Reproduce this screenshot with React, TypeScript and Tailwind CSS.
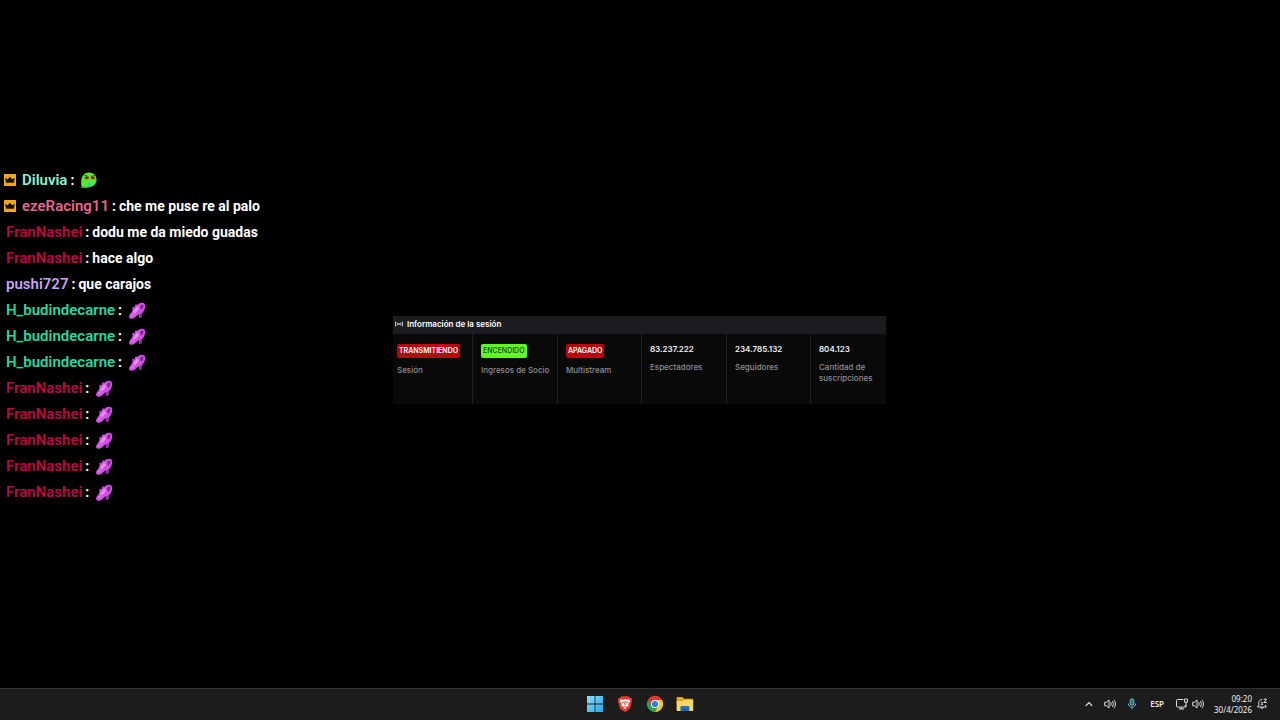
import type { ReactNode } from "react";
import clsx from "clsx";

type Message = {
  user: string;
  color: string;
  crown?: boolean;
  text?: string;
  emote?: "sick" | "heel";
};

const messages: Message[] = [
  { user: "Diluvia", color: "text-[#8ff0d0]", crown: true, emote: "sick" },
  { user: "ezeRacing11", color: "text-[#e0688c]", crown: true, text: "che me puse re al palo" },
  { user: "FranNashei", color: "text-[#bc0a40]", text: "dodu me da miedo guadas" },
  { user: "FranNashei", color: "text-[#bc0a40]", text: "hace algo" },
  { user: "pushi727", color: "text-[#c8a2f4]", text: "que carajos" },
  { user: "H_budindecarne", color: "text-[#2bd6a0]", emote: "heel" },
  { user: "H_budindecarne", color: "text-[#2bd6a0]", emote: "heel" },
  { user: "H_budindecarne", color: "text-[#2bd6a0]", emote: "heel" },
  { user: "FranNashei", color: "text-[#bc0a40]", emote: "heel" },
  { user: "FranNashei", color: "text-[#bc0a40]", emote: "heel" },
  { user: "FranNashei", color: "text-[#bc0a40]", emote: "heel" },
  { user: "FranNashei", color: "text-[#bc0a40]", emote: "heel" },
  { user: "FranNashei", color: "text-[#bc0a40]", emote: "heel" },
];

type Stat = { label: string; value: string; badge?: "red" | "green" };

const stats: Stat[] = [
  { label: "Sesión", value: "TRANSMITIENDO", badge: "red" },
  { label: "Ingresos de Socio", value: "ENCENDIDO", badge: "green" },
  { label: "Multistream", value: "APAGADO", badge: "red" },
  { label: "Espectadores", value: "83.237.222" },
  { label: "Seguidores", value: "234.785.132" },
  { label: "Cantidad de suscripciones", value: "804.123" },
];

function CrownBadge() {
  return (
    <svg viewBox="0 0 12 12" className="mr-1.5 h-3 w-3 shrink-0">
      <rect width="12" height="12" rx="0.5" fill="#f0a820" />
      <path d="M1.200 3.800 3.600 5.200 6 2.800l2.400 2.400 2.400-1.400-.9 5H2.100z" fill="#1a1204" />
    </svg>
  );
}

function SickEmote() {
  return (
    <svg viewBox="0 0 18 18" className="ml-1.5 h-[18px] w-[18px]">
      <path d="M9 1.400c4.600 0 7.600 3 7.600 7.200 0 4.400-3.200 7.400-7.200 7.400-1.600 0-2.400.8-4 .8H1.800C1.200 15.600 1.200 13.400 1.200 11 1.200 5.200 4.200 1.400 9 1.400z" fill="#58e832" />
      <path d="M1.600 13.500c.6 2.200 2 3.200 4.400 3.100l2.200-.4c-3-.5-5.200-1.200-6.600-2.700z" fill="#34c62c" />
      <path d="m4.400 4.400 4 1.200M14.800 4.400l-3.800 1.200" stroke="#5a5a14" strokeWidth="1.200" />
      <ellipse cx="6.800" cy="6.800" rx="2.400" ry="1.600" fill="#a84a20" />
      <ellipse cx="13" cy="6.800" rx="2.400" ry="1.600" fill="#a84a20" />
      <circle cx="7" cy="6.800" r=".8" fill="#38180c" />
      <circle cx="12.800" cy="6.800" r=".8" fill="#38180c" />
      <path d="M7.800 11.200h2.600v3c0 1.500-.8 2.400-1.600 2.400s-1.500-.8-1.400-2z" fill="#38c8c0" />
    </svg>
  );
}

// High heel: toe at the lower left, ankle opening at the upper right
function HeelEmote() {
  return (
    <svg viewBox="0 0 18 18" className="ml-1.5 h-[18px] w-[18px]">
      <path d="M9.600 3.800c1.200-1.800 3.800-2.600 5.900-1.900 1.800.7 2.100 2.700 1.500 5-.7 2.500-2 4.400-3.200 5.600l-.5 4-2.200.3-.1-3.600c-2.300.9-3.700 4.100-7 4.600-1.800.2-3.300-1-3-2.600.5-2 2.700-3.200 3.400-5.600l.2-4 1.900.9.900-2.900z" fill="#d050e0" />
      <path d="M12.400 5c.9-1.400 2.200-1.800 2.800-1.300.6.700.1 2.600-.9 4-.7.900-1.700.8-2-.1-.3-.8-.2-1.800.1-2.600z" fill="#7a2a92" />
      <path d="M11.300 13.200 13.500 12l-.4 4.400-1.700.2z" fill="#8a2ca4" />
      <path d="M4.900 10.800 9.300 5l1.700 3.100-3.900 4.500z" fill="#ed8cf2" />
      <path d="m2.200 14.500 3-2.900 1.900 1.600-3 2.800z" fill="#de6aec" />
    </svg>
  );
}

function ChatLine({ user, color, crown, text, emote }: Message) {
  return (
    <li className={clsx("flex h-[26px] items-center", crown ? "pl-1" : "pl-1.5")}>
      {crown && <CrownBadge />}
      <span className={clsx("text-[15px] font-semibold", color)}>{user}</span>
      <span className="ml-[3px] font-bold">:</span>
      {text && <span className="ml-[3px] font-bold">{text}</span>}
      {emote === "sick" && <SickEmote />}
      {emote === "heel" && <HeelEmote />}
    </li>
  );
}

function StatCell({ label, value, badge }: Stat) {
  return (
    <div className="flex flex-col items-start border-l border-[#1f1f21] pl-2 pt-2 first:border-l-0 first:pl-1">
      <dd
        className={clsx(
          "whitespace-nowrap",
          badge && "mt-0.5 rounded-[2px] px-0.5 text-[7px] leading-[14px]",
          badge === "red" && "bg-[#b9060f] font-semibold text-white",
          badge === "green" && "bg-[#62f726] font-medium text-[#124c08]",
          !badge && "text-[8px] font-semibold leading-[14px] text-[#f2f2f2]",
        )}
      >
        {value}
      </dd>
      <dt
        className={clsx(
          "order-last max-w-[72px] text-[8px] font-medium leading-[11px] text-[#8d8e92]",
          badge ? "mt-[7px]" : "mt-1.5",
        )}
      >
        {label}
      </dt>
    </div>
  );
}

function SessionPanel() {
  return (
    <section className="w-[493px] shrink-0 bg-[#09090a] font-['Inter',sans-serif]">
      <header className="flex h-[18px] items-center gap-1 bg-[#1b1c1f] pb-0.5 pl-0.5">
        <svg viewBox="0 0 8 6" className="h-1.5 w-2" fill="none" stroke="#d0d0d2" strokeWidth="1">
          <path d="M.6.600v4.800M2 1.500c.6.900.6 2.100 0 3M7.400.600v4.800M6 1.500c-.6.900-.6 2.100 0 3" />
          <circle cx="4" cy="3" r=".9" fill="#d0d0d2" stroke="none" />
        </svg>
        <h1 className="text-[8px] font-semibold leading-3 text-white">Información de la sesión</h1>
      </header>
      <dl className="grid h-[70px] grid-cols-[79fr_85fr_84fr_85fr_84fr_76fr]">
        {stats.map((stat) => (
          <StatCell key={stat.label} {...stat} />
        ))}
      </dl>
    </section>
  );
}

function TaskButton({ label, children }: { label: string; children: ReactNode }) {
  return (
    <button type="button" aria-label={label} className="flex items-center justify-center">
      {children}
    </button>
  );
}

function Speaker() {
  return (
    <svg viewBox="0 0 12 12" className="h-3 w-3" fill="none" stroke="#dcdcdc" strokeWidth="1">
      <path d="M.7 4.300h1.700L5 2v8L2.400 7.700H.7z" />
      <path d="M6.600 4.300c.8 1 .8 2.400 0 3.400M8.200 3c1.500 1.800 1.500 4.200 0 6M9.800 1.800c2.200 2.500 2.200 5.900 0 8.400" />
    </svg>
  );
}

function Taskbar() {
  return (
    <footer className="grid h-8 shrink-0 grid-cols-[1fr_auto_1fr] items-center border-t border-[#303030] bg-[#1c1c1c] pb-0.5">
      <nav className="col-start-2 flex items-center gap-3">
        <TaskButton label="Inicio">
          <svg viewBox="0 0 18 18" className="h-[18px] w-[18px]">
            <defs>
              <linearGradient id="win" x1="0" y1="0" x2="1" y2="1">
                <stop offset="0" stopColor="#8be0fb" />
                <stop offset="1" stopColor="#26a5e8" />
              </linearGradient>
            </defs>
            <path d="M1 1h7.600v7.600H1zM9.400 1H17v7.600H9.400zM1 9.400h7.600V17H1zM9.400 9.400H17V17H9.400z" fill="url(#win)" />
          </svg>
        </TaskButton>
        <TaskButton label="Brave">
          <svg viewBox="0 0 18 18" className="h-[18px] w-[18px]">
            <path d="M5.600 1.300h6.800l1.500 1.500 1.500.1.900 2.600-.5 1.200-1.600 6.300c-.3 1-2.700 2.600-5.200 4-2.500-1.400-4.900-3-5.200-4L2.200 6.700l-.5-1.200.9-2.600 1.500-.1z" fill="#e8392d" />
            <path d="m5 4.200 2.200.5L9 4.200l1.800.5L13 4.200l1.300 2-2.100 2.900.4 1.600-2.200 1.400L9 14.400l-1.400-2.300-2.200-1.400.4-1.600-2.100-2.900z" fill="#fff" />
            <path d="m5.200 6.400 2.500.7-.6 1.700zM12.800 6.400l-2.500.7.600 1.700zM8.500 6h1l.2 3.800-.7.700-.7-.7zM6.800 10.600l2.200.8 2.200-.8L9 12.400z" fill="#e8392d" />
          </svg>
        </TaskButton>
        <TaskButton label="Chrome">
          <svg viewBox="0 0 18 18" className="h-[18px] w-[18px]">
            <path d="M9 9V5h7a8 8 0 0 1-7 12z" fill="#f9c922" />
            <path d="M2 5a8 8 0 0 0 7 12l3.500-6L9 9z" fill="#2ea04c" />
            <path d="M2 5 5.500 11 9 9V5h7a8 8 0 0 0-14 0z" fill="#e3392c" />
            <circle cx="9" cy="9" r="4" fill="#fff" />
            <circle cx="9" cy="9" r="3.100" fill="#2f7de9" />
          </svg>
        </TaskButton>
        <TaskButton label="Explorador de archivos">
          <svg viewBox="0 0 18 18" className="h-[18px] w-[18px]">
            <path d="M.6 3c0-.6.400-1 1-1h4.800l1.800 1.800h8c.6 0 1 .4 1 1V8H.6z" fill="#e5a525" />
            <path d="M.6 6.200h6.200L8.400 5h7.800c.6 0 1 .4 1 1v9c0 .6-.4 1-1 1H1.600c-.6 0-1-.4-1-1z" fill="#fbd567" />
            <path d="M4.400 16v-3.600c0-.8.600-1.400 1.400-1.400H12c.8 0 1.400.6 1.400 1.400V16z" fill="#2375b8" />
            <path d="M6 14h5.800v1H6z" fill="#15578f" />
          </svg>
        </TaskButton>
      </nav>
      <div className="flex items-center justify-end pr-3 font-['Noto_Sans',sans-serif] text-[#eeeeee]">
        <TaskButton label="Mostrar iconos ocultos">
          <svg viewBox="0 0 8 8" className="mr-[11px] h-2 w-2" fill="none" stroke="#e6e6e6" strokeWidth="1.200">
            <path d="m.8 5.800 3.200-3.300 3.200 3.300" />
          </svg>
        </TaskButton>
        <TaskButton label="Sonido">
          <Speaker />
        </TaskButton>
        <TaskButton label="Micrófono">
          <svg viewBox="0 0 12 12" className="mx-2.5 h-3 w-3" fill="none" stroke="#6fb9bd" strokeWidth="1">
            <rect x="4.200" y=".8" width="3.600" height="6.400" rx="1.800" fill="#2f7478" />
            <path d="M2.300 5.400c0 5 7.400 5 7.400 0M6 9.200v2.300" />
          </svg>
        </TaskButton>
        <button type="button" className="ml-0.5 mr-3 text-[8px] font-semibold leading-3">
          ESP
        </button>
        <button type="button" aria-label="Red y volumen" className="flex items-center gap-1">
          <svg viewBox="0 0 12 12" className="h-3 w-3" fill="none" stroke="#dcdcdc" strokeWidth="1">
            <path d="M7.400 1.500H1.500c-.6 0-1 .4-1 1v5.600c0 .6.400 1 1 1h7.800V6.800M3 11h5M5.200 9.200V11" />
            <path d="M8.600 1h2.800v3.200H8.600zM10 4.200v5" />
          </svg>
          <Speaker />
        </button>
        <button type="button" className="ml-2.5 mr-1 text-right text-[8px] leading-[11px]">
          <time className="block">09:20</time>
          <time className="block">30/4/2026</time>
        </button>
        <TaskButton label="Notificaciones">
          <svg viewBox="0 0 12 12" className="h-3 w-3" fill="none" stroke="#dcdcdc" strokeWidth="1">
            <path d="M6 1.500c-2 0-3.200 1.400-3.200 3.300v2L1.500 9h8.800L9.200 7M4.600 9.200c.2 1.700 2.400 1.700 2.700 0" />
            <path d="M7.600 1.200h3L7.900 4.500h3M5.200 4.300h1.600L5.200 6.500h1.700" />
          </svg>
        </TaskButton>
      </div>
    </footer>
  );
}

export default function App() {
  return (
    <div className="flex min-h-screen flex-col bg-black">
      <main className="flex flex-1 items-center pr-px pt-8">
        <ul className="min-w-0 flex-1 pb-12 font-['Roboto',sans-serif] text-[14px] leading-[26px] text-white">
          {messages.map((message, i) => (
            <ChatLine key={i} {...message} />
          ))}
        </ul>
        <SessionPanel />
        <div className="flex-1" />
      </main>
      <Taskbar />
    </div>
  );
}
